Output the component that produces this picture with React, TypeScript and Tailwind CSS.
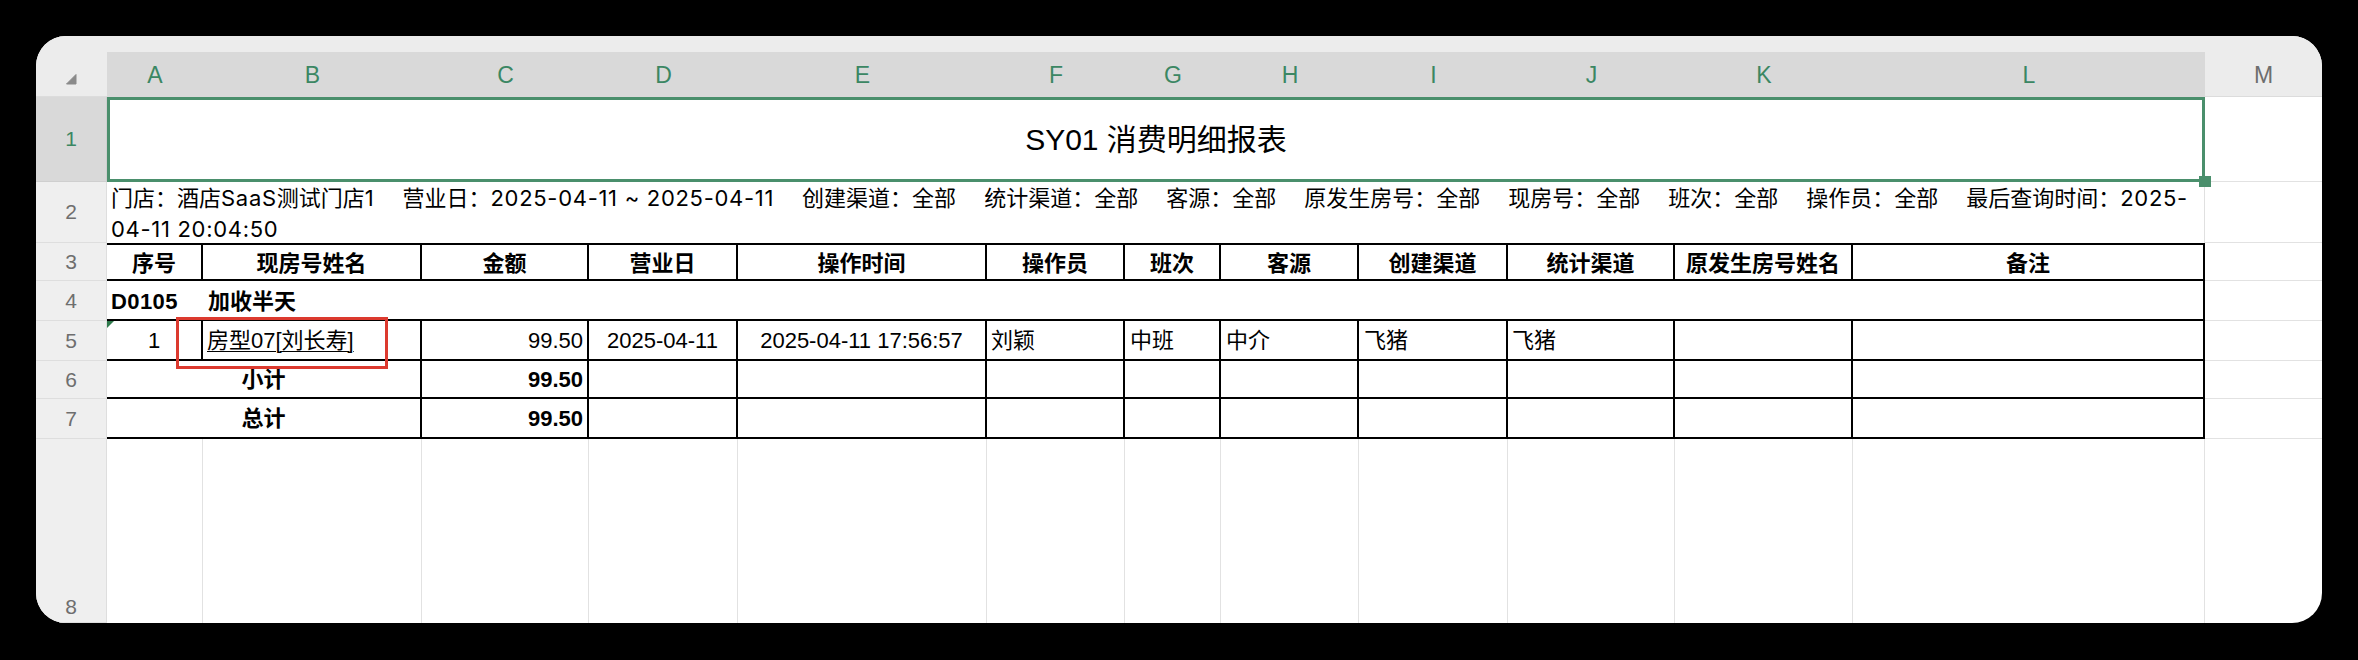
import type { ReactNode } from 'react'

const LETTERS = ['A', 'B', 'C', 'D', 'E', 'F', 'G', 'H', 'I', 'J', 'K', 'L']

const HEADERS = [
  '序号',
  '现房号姓名',
  '金额',
  '营业日',
  '操作时间',
  '操作员',
  '班次',
  '客源',
  '创建渠道',
  '统计渠道',
  '原发生房号姓名',
  '备注',
]

// latin runs in the info row are a touch wider than the fallback font
function L({ children }: { children: ReactNode }) {
  return <span className="tracking-[0.7px]">{children}</span>
}

const INFO: ReactNode[] = [
  <>门店：酒店<L>SaaS</L>测试门店<L>1</L></>,
  <>营业日：<L>2025-04-11 ~ 2025-04-11</L></>,
  '创建渠道：全部',
  '统计渠道：全部',
  '客源：全部',
  '原发生房号：全部',
  '现房号：全部',
  '班次：全部',
  '操作员：全部',
  <>最后查询时间：<L>2025-</L></>,
]

const box = 'border-r-2 border-b-2 border-black'

function RowHead({ label, active, end }: { label: string; active?: boolean; end?: boolean }) {
  return (
    <div
      className={
        'flex justify-center border-r border-b text-[21px] ' +
        (active
          ? 'bg-[#d9d9d9] border-[#cfcfcf] text-[#3b8763] '
          : 'bg-[#efefef] border-[#dedede] text-[#6e6e6e] ') +
        (end ? 'items-end' : 'items-center')
      }
    >
      {label}
    </div>
  )
}

function MCell() {
  return <div className="border-b border-[#e2e2e2] bg-white" />
}

export default function App() {
  return (
    <div className="h-[660px] w-[2358px] bg-black pl-[36px] pt-[36px] font-['Liberation_Sans','Noto_Sans_CJK_SC',sans-serif] text-black">
      <div className="relative grid h-[587px] w-[2286px] grid-cols-[71px_96px_219px_167px_149px_249px_138px_96px_138px_149px_167px_178px_352px_117px] grid-rows-[16px_45px_85px_61px_38px_40px_40px_38px_40px_184px] overflow-hidden rounded-[30px] bg-white">
        {/* top strip */}
        <div className="col-span-14 bg-[#ececec]" />

        {/* column letters */}
        <div className="relative border-b border-[#dcdcdc] bg-[#ececec]">
          <svg className="absolute left-[30px] top-[22px]" width="11" height="11" viewBox="0 0 11 11">
            <path d="M10 0.5 L10 10 L0.5 10 Z" fill="#8a8a8a" stroke="#8a8a8a" strokeLinejoin="round" />
          </svg>
        </div>
        {LETTERS.map((l) => (
          <div key={l} className="flex items-center justify-center bg-[#d9d9d9] pt-[2px] text-[23px] text-[#3b8763]">
            {l}
          </div>
        ))}
        <div className="flex items-center justify-center border-b border-[#dcdcdc] bg-[#ececec] pt-[2px] text-[23px] text-[#6e6e6e]">
          M
        </div>

        {/* row 1 title */}
        <RowHead label="1" active />
        <div className="col-span-12 flex items-center justify-center border-[3px] border-[#4a8f6c] text-[30px]">
          SY01 消费明细报表
        </div>
        <MCell />

        {/* row 2 info */}
        <RowHead label="2" />
        <div className="col-span-12 border-r border-[#e0e0e0] pl-[4px] pt-[1px] font-['Inter','Noto_Sans_CJK_SC',sans-serif] text-[22px] leading-[31px]">
          <div className="flex gap-[28px] whitespace-nowrap">
            {INFO.map((s, i) => (
              <span key={i}>{s}</span>
            ))}
          </div>
          <div>
            <L>04-11 20:04:50</L>
          </div>
        </div>
        <MCell />

        {/* row 3 headers */}
        <RowHead label="3" />
        {HEADERS.map((h) => (
          <div key={h} className={'flex items-center justify-center border-t-2 pt-[2px] text-[22px] font-bold ' + box}>
            {h}
          </div>
        ))}
        <MCell />

        {/* row 4 group */}
        <RowHead label="4" />
        <div className="flex items-center border-b-2 border-black pl-[4px] pt-[2px] text-[22px] font-bold tracking-[0.4px]">
          D0105
        </div>
        <div className="col-span-11 flex items-center border-r-2 border-b-2 border-black pl-[5px] pt-[2px] text-[22px] font-bold">
          加收半天
        </div>
        <MCell />

        {/* row 5 detail */}
        <RowHead label="5" />
        <div className={'relative flex items-center justify-center text-[22px] ' + box}>
          <svg className="absolute left-0 top-0" width="7" height="7" viewBox="0 0 7 7">
            <path d="M0 0 L7 0 L0 7 Z" fill="#2f7a4c" />
          </svg>
          1
        </div>
        <div className={'flex items-center pl-[4px] text-[22px] ' + box}>
          <span className="underline decoration-1 underline-offset-[3px]">房型07[刘长寿]</span>
        </div>
        <div className={'flex items-center justify-end pr-[4px] text-[22px] ' + box}>99.50</div>
        <div className={'flex items-center justify-center text-[22px] ' + box}>2025-04-11</div>
        <div className={'flex items-center justify-center text-[22px] ' + box}>2025-04-11 17:56:57</div>
        <div className={'flex items-center pl-[4px] text-[22px] ' + box}>刘颖</div>
        <div className={'flex items-center pl-[5px] text-[22px] ' + box}>中班</div>
        <div className={'flex items-center pl-[5px] text-[22px] ' + box}>中介</div>
        <div className={'flex items-center pl-[5px] text-[22px] ' + box}>飞猪</div>
        <div className={'flex items-center pl-[4px] text-[22px] ' + box}>飞猪</div>
        <div className={box} />
        <div className={box} />
        <MCell />

        {/* row 6 subtotal */}
        <RowHead label="6" />
        <div className={'col-span-2 flex items-center justify-center text-[22px] font-bold ' + box}>小计</div>
        <div className={'flex items-center justify-end pr-[4px] text-[22px] font-bold ' + box}>99.50</div>
        {Array.from({ length: 9 }).map((_, i) => (
          <div key={i} className={box} />
        ))}
        <MCell />

        {/* row 7 total */}
        <RowHead label="7" />
        <div className={'col-span-2 flex items-center justify-center text-[22px] font-bold ' + box}>总计</div>
        <div className={'flex items-center justify-end pr-[4px] text-[22px] font-bold ' + box}>99.50</div>
        {Array.from({ length: 9 }).map((_, i) => (
          <div key={i} className={box} />
        ))}
        <MCell />

        {/* row 8 empty */}
        <RowHead label="8" end />
        {LETTERS.map((l) => (
          <div key={l} className="border-r border-[#e2e2e2]" />
        ))}
        <div />

        {/* selection handle */}
        <div className="absolute left-[2163px] top-[140px] h-[11px] w-[12px] bg-[#4a8f6c]" />
        {/* red annotation box */}
        <div className="absolute left-[140px] top-[281px] h-[52px] w-[212px] border-[3px] border-[#dc3a2f]" />
      </div>
    </div>
  )
}
